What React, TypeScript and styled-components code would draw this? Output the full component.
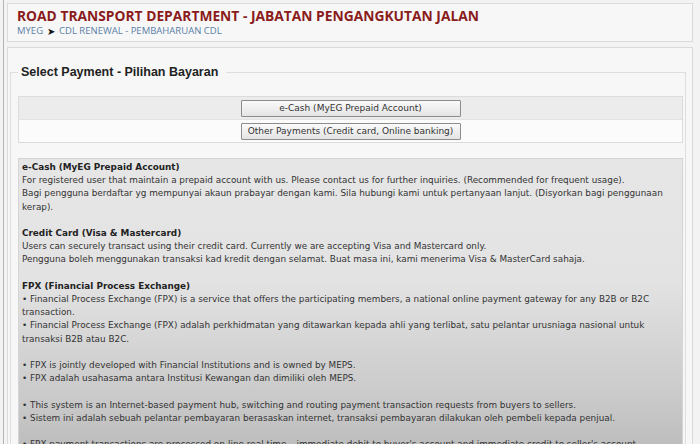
import styled, { createGlobalStyle } from "styled-components";

const GlobalStyle = createGlobalStyle`
  html, body {
    margin: 0;
    padding: 0;
    background: #f3f3f3;
    overflow: hidden;
  }
`;

const Frame = styled.div`
  height: 444px;
  margin-left: 3px;
  border-left: 1px solid #b4b4b4;
  padding: 3px 7px 0 3px;
  box-sizing: border-box;
  overflow: hidden;
`;

const Header = styled.div`
  background: #f7f7f7;
  border: 1px solid #dadada;
  padding: 3px 9px 3px;
`;

const Title = styled.h1`
  margin: 0;
  font-family: "Open Sans", sans-serif;
  font-weight: 700;
  font-size: 13.8px;
  line-height: 17px;
  color: #8a1c1c;
`;

const Crumbs = styled.div`
  margin-top: 0;
  font-family: "Open Sans", sans-serif;
  font-size: 9.5px;
  line-height: 14px;
  color: #5b7fa6;
  display: flex;
  align-items: center;
  gap: 4px;
`;

const Arrow = styled.span`
  color: #111;
  font-size: 10px;
`;

const Panel = styled.div`
  margin-top: 5px;
  background: #f7f7f7;
  border: 1px solid #dadada;
  padding: 17px 6px 0 2px;
  height: 400px;
  box-sizing: border-box;
`;

const Fieldset = styled.fieldset`
  margin: 0;
  border: 1px solid #dedede;
  padding: 17px 2px 0 7px;
  height: 420px;
`;

const Legend = styled.legend`
  font-family: "Liberation Sans", Arial, sans-serif;
  font-weight: 700;
  font-size: 12.5px;
  color: #222;
  padding: 0 8px 0 3px;
`;

const Options = styled.div`
  border: 1px solid #dcdcdc;
`;

const OptionRow = styled.div<{ $shade?: boolean }>`
  height: 22px;
  display: flex;
  align-items: center;
  justify-content: center;
  background: ${(p) => (p.$shade ? "#ececec" : "#fbfbfb")};
  & + & {
    border-top: 1px solid #e2e2e2;
  }
`;

const PayButton = styled.button`
  width: 220px;
  height: 17px;
  padding: 0;
  border: 1px solid #8c8c8c;
  border-radius: 1px;
  background: linear-gradient(#fafafa, #e4e4e4);
  font-family: "DejaVu Sans", Verdana, sans-serif;
  font-size: 9px;
  color: #333;
`;

const Info = styled.div`
  margin-top: 15px;
  border: 1px solid #d4d4d4;
  background: linear-gradient(#e6e6e6 0%, #e3e3e3 40%, #c9c9c9 80%, #b9b9b9 100%);
  padding: 2px 8px 0 3px;
  font-family: "DejaVu Sans", Verdana, sans-serif;
  font-size: 8.85px;
  line-height: 13.2px;
  color: #333;
  height: 300px;
`;

const Block = styled.p`
  margin: 0 0 13.2px;
`;

const Head = styled.strong`
  display: block;
  color: #222;
`;

const sections = [
  {
    title: "e-Cash (MyEG Prepaid Account)",
    paras: [
      [
        "For registered user that maintain a prepaid account with us. Please contact us for further inquiries. (Recommended for frequent usage).",
        "Bagi pengguna berdaftar yg mempunyai akaun prabayar dengan kami. Sila hubungi kami untuk pertanyaan lanjut. (Disyorkan bagi penggunaan kerap).",
      ],
    ],
  },
  {
    title: "Credit Card (Visa & Mastercard)",
    paras: [
      [
        "Users can securely transact using their credit card. Currently we are accepting Visa and Mastercard only.",
        "Pengguna boleh menggunakan transaksi kad kredit dengan selamat. Buat masa ini, kami menerima Visa & MasterCard sahaja.",
      ],
    ],
  },
  {
    title: "FPX (Financial Process Exchange)",
    paras: [
      [
        "• Financial Process Exchange (FPX) is a service that offers the participating members, a national online payment gateway for any B2B or B2C transaction.",
        "• Financial Process Exchange (FPX) adalah perkhidmatan yang ditawarkan kepada ahli yang terlibat, satu pelantar urusniaga nasional untuk transaksi B2B atau B2C.",
      ],
      [
        "• FPX is jointly developed with Financial Institutions and is owned by MEPS.",
        "• FPX adalah usahasama antara Institusi Kewangan dan dimiliki oleh MEPS.",
      ],
      [
        "• This system is an Internet-based payment hub, switching and routing payment transaction requests from buyers to sellers.",
        "• Sistem ini adalah sebuah pelantar pembayaran berasaskan internet, transaksi pembayaran dilakukan oleh pembeli kepada penjual.",
      ],
      [
        "• FPX payment transactions are processed on-line real time – immediate debit to buyer's account and immediate credit to seller's account.",
      ],
    ],
  },
];

export default function App() {
  return (
    <>
      <GlobalStyle />
      <Frame>
        <Header>
          <Title>ROAD TRANSPORT DEPARTMENT - JABATAN PENGANGKUTAN JALAN</Title>
          <Crumbs>
            <span>MYEG</span>
            <Arrow>➤</Arrow>
            <span>CDL RENEWAL - PEMBAHARUAN CDL</span>
          </Crumbs>
        </Header>
        <Panel>
          <Fieldset>
            <Legend>Select Payment - Pilihan Bayaran</Legend>
            <Options>
              <OptionRow $shade>
                <PayButton>e-Cash (MyEG Prepaid Account)</PayButton>
              </OptionRow>
              <OptionRow>
                <PayButton>Other Payments (Credit card, Online banking)</PayButton>
              </OptionRow>
            </Options>
            <Info>
              {sections.map((s) => (
                <div key={s.title}>
                  {s.paras.map((lines, i) => (
                    <Block key={i}>
                      {i === 0 && <Head>{s.title}</Head>}
                      {lines.map((l) => (
                        <span key={l}>
                          {l}
                          <br />
                        </span>
                      ))}
                    </Block>
                  ))}
                </div>
              ))}
            </Info>
          </Fieldset>
        </Panel>
      </Frame>
    </>
  );
}
